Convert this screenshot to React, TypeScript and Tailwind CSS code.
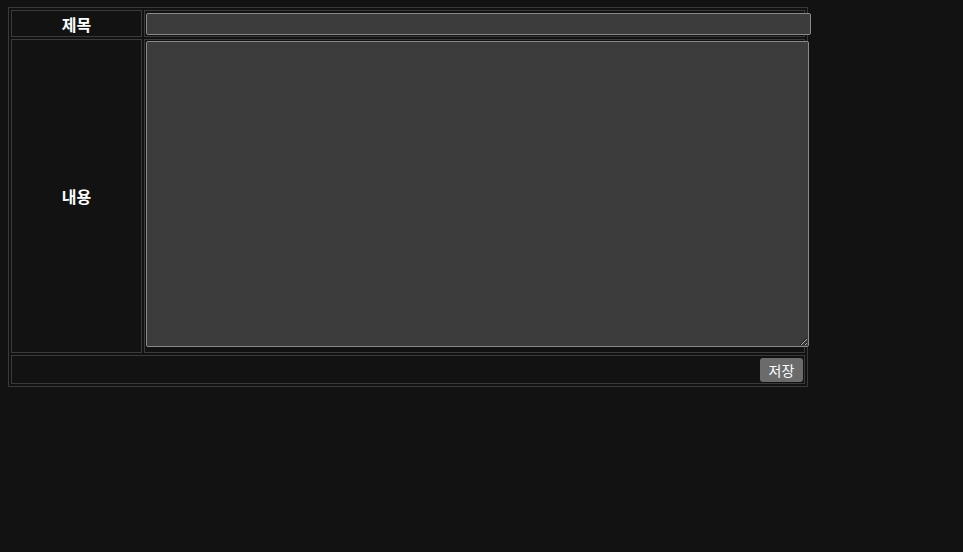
import React, { useState } from 'react';

const App: React.FC = () => {
  const [title, setTitle] = useState('');
  const [body, setBody] = useState('');

  return (
    <div className="min-h-[552px] w-full bg-[#121212] pt-[7px] pl-2 font-['Noto_Sans_CJK_KR','Noto_Sans',sans-serif]">
      <table className="table-fixed w-[800px] border border-[#3a3a3a] border-separate border-spacing-[2px]">
        <colgroup>
          <col className="w-[131px]" />
          <col />
        </colgroup>
        <tbody>
          <tr>
            <td className="h-[27px] border border-[#3a3a3a] p-px text-center align-middle text-[16px] font-bold leading-none text-white">
              제목
            </td>
            <td className="h-[27px] border border-[#3a3a3a] p-px align-middle">
              <input
                type="text"
                value={title}
                onChange={(e) => setTitle(e.target.value)}
                className="block w-[665px] h-[22px] mt-px rounded-[2px] border border-[#8a8a8a] bg-[#3c3c3c] px-1 text-[13px] text-white outline-none"
              />
            </td>
          </tr>
          <tr>
            <td className="h-[314px] border border-[#3a3a3a] p-px text-center align-middle text-[16px] font-bold leading-none text-white">
              내용
            </td>
            <td className="h-[314px] border border-[#3a3a3a] p-px align-top">
              <textarea
                value={body}
                onChange={(e) => setBody(e.target.value)}
                className="block w-[663px] h-[306px] rounded-[2px] border border-[#8a8a8a] bg-[#3c3c3c] p-1 text-[13px] text-white outline-none"
              />
            </td>
          </tr>
          <tr>
            <td colSpan={2} className="h-[28px] border border-[#3a3a3a] p-px text-right align-middle">
              <button className="inline-block h-[24px] w-[43px] rounded-[3px] bg-[#6b6b6b] text-[14px] leading-none text-white">
                저장
              </button>
            </td>
          </tr>
        </tbody>
      </table>
    </div>
  );
};

export default App;
